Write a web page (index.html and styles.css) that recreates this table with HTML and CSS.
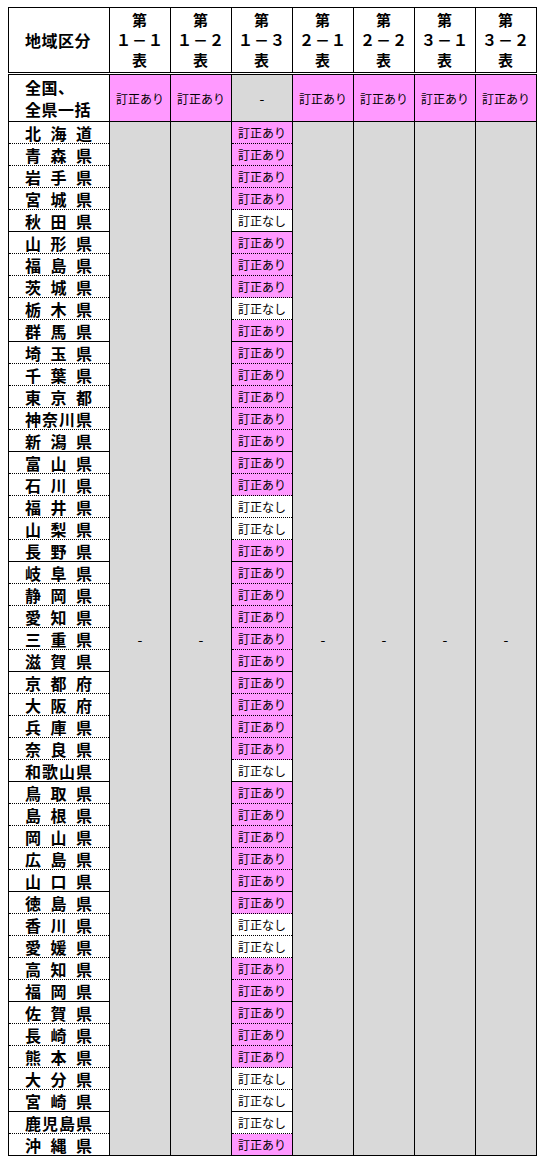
FILE: index.html
```html
<!DOCTYPE html>
<html lang="ja">
<head>
<meta charset="utf-8">
<title>訂正状況</title>
<link rel="stylesheet" href="styles.css">
</head>
<body>
<table class="tbl">
<colgroup><col class="c1"><col class="cn"><col class="cn"><col class="cn"><col class="cn"><col class="cn"><col class="cn"><col class="cn"></colgroup>
<thead>
<tr class="head">
<th class="name"><span class="lbl">地域区分</span></th>
<th>第<br>１－１<br>表</th>
<th>第<br>１－２<br>表</th>
<th>第<br>１－３<br>表</th>
<th>第<br>２－１<br>表</th>
<th>第<br>２－２<br>表</th>
<th>第<br>３－１<br>表</th>
<th>第<br>３－２<br>表</th>
</tr>
</thead>
<tbody>
<tr class="all">
<td class="name"><span class="lbl2">全国、<br>全県一括</span></td>
<td class="ari">訂正あり</td>
<td class="ari">訂正あり</td>
<td class="gray dash">-</td>
<td class="ari">訂正あり</td>
<td class="ari">訂正あり</td>
<td class="ari">訂正あり</td>
<td class="ari">訂正あり</td>
</tr>
<tr class="p"><td class="name"><span class="j">北 海 道</span></td><td class="gray span dash" rowspan="47">-</td><td class="gray span dash" rowspan="47">-</td><td class="ari">訂正あり</td><td class="gray span dash" rowspan="47">-</td><td class="gray span dash" rowspan="47">-</td><td class="gray span dash" rowspan="47">-</td><td class="gray span dash" rowspan="47">-</td></tr>
<tr class="p"><td class="name"><span class="j">青 森 県</span></td><td class="ari">訂正あり</td></tr>
<tr class="p"><td class="name"><span class="j">岩 手 県</span></td><td class="ari">訂正あり</td></tr>
<tr class="p"><td class="name"><span class="j">宮 城 県</span></td><td class="ari">訂正あり</td></tr>
<tr class="p end"><td class="name"><span class="j">秋 田 県</span></td><td class="nashi">訂正なし</td></tr>
<tr class="p"><td class="name"><span class="j">山 形 県</span></td><td class="ari">訂正あり</td></tr>
<tr class="p"><td class="name"><span class="j">福 島 県</span></td><td class="ari">訂正あり</td></tr>
<tr class="p"><td class="name"><span class="j">茨 城 県</span></td><td class="ari">訂正あり</td></tr>
<tr class="p"><td class="name"><span class="j">栃 木 県</span></td><td class="nashi">訂正なし</td></tr>
<tr class="p end"><td class="name"><span class="j">群 馬 県</span></td><td class="ari">訂正あり</td></tr>
<tr class="p"><td class="name"><span class="j">埼 玉 県</span></td><td class="ari">訂正あり</td></tr>
<tr class="p"><td class="name"><span class="j">千 葉 県</span></td><td class="ari">訂正あり</td></tr>
<tr class="p"><td class="name"><span class="j">東 京 都</span></td><td class="ari">訂正あり</td></tr>
<tr class="p"><td class="name"><span class="j">神奈川県</span></td><td class="ari">訂正あり</td></tr>
<tr class="p end"><td class="name"><span class="j">新 潟 県</span></td><td class="ari">訂正あり</td></tr>
<tr class="p"><td class="name"><span class="j">富 山 県</span></td><td class="ari">訂正あり</td></tr>
<tr class="p"><td class="name"><span class="j">石 川 県</span></td><td class="ari">訂正あり</td></tr>
<tr class="p"><td class="name"><span class="j">福 井 県</span></td><td class="nashi">訂正なし</td></tr>
<tr class="p"><td class="name"><span class="j">山 梨 県</span></td><td class="nashi">訂正なし</td></tr>
<tr class="p end"><td class="name"><span class="j">長 野 県</span></td><td class="ari">訂正あり</td></tr>
<tr class="p"><td class="name"><span class="j">岐 阜 県</span></td><td class="ari">訂正あり</td></tr>
<tr class="p"><td class="name"><span class="j">静 岡 県</span></td><td class="ari">訂正あり</td></tr>
<tr class="p"><td class="name"><span class="j">愛 知 県</span></td><td class="ari">訂正あり</td></tr>
<tr class="p"><td class="name"><span class="j">三 重 県</span></td><td class="ari">訂正あり</td></tr>
<tr class="p end"><td class="name"><span class="j">滋 賀 県</span></td><td class="ari">訂正あり</td></tr>
<tr class="p"><td class="name"><span class="j">京 都 府</span></td><td class="ari">訂正あり</td></tr>
<tr class="p"><td class="name"><span class="j">大 阪 府</span></td><td class="ari">訂正あり</td></tr>
<tr class="p"><td class="name"><span class="j">兵 庫 県</span></td><td class="ari">訂正あり</td></tr>
<tr class="p"><td class="name"><span class="j">奈 良 県</span></td><td class="ari">訂正あり</td></tr>
<tr class="p end"><td class="name"><span class="j">和歌山県</span></td><td class="nashi">訂正なし</td></tr>
<tr class="p"><td class="name"><span class="j">鳥 取 県</span></td><td class="ari">訂正あり</td></tr>
<tr class="p"><td class="name"><span class="j">島 根 県</span></td><td class="ari">訂正あり</td></tr>
<tr class="p"><td class="name"><span class="j">岡 山 県</span></td><td class="ari">訂正あり</td></tr>
<tr class="p"><td class="name"><span class="j">広 島 県</span></td><td class="ari">訂正あり</td></tr>
<tr class="p end"><td class="name"><span class="j">山 口 県</span></td><td class="ari">訂正あり</td></tr>
<tr class="p"><td class="name"><span class="j">徳 島 県</span></td><td class="ari">訂正あり</td></tr>
<tr class="p"><td class="name"><span class="j">香 川 県</span></td><td class="nashi">訂正なし</td></tr>
<tr class="p"><td class="name"><span class="j">愛 媛 県</span></td><td class="nashi">訂正なし</td></tr>
<tr class="p"><td class="name"><span class="j">高 知 県</span></td><td class="ari">訂正あり</td></tr>
<tr class="p end"><td class="name"><span class="j">福 岡 県</span></td><td class="ari">訂正あり</td></tr>
<tr class="p"><td class="name"><span class="j">佐 賀 県</span></td><td class="ari">訂正あり</td></tr>
<tr class="p"><td class="name"><span class="j">長 崎 県</span></td><td class="ari">訂正あり</td></tr>
<tr class="p"><td class="name"><span class="j">熊 本 県</span></td><td class="ari">訂正あり</td></tr>
<tr class="p"><td class="name"><span class="j">大 分 県</span></td><td class="nashi">訂正なし</td></tr>
<tr class="p end"><td class="name"><span class="j">宮 崎 県</span></td><td class="nashi">訂正なし</td></tr>
<tr class="p"><td class="name"><span class="j">鹿児島県</span></td><td class="nashi">訂正なし</td></tr>
<tr class="p end"><td class="name"><span class="j">沖 縄 県</span></td><td class="ari">訂正あり</td></tr>
</tbody>
</table>
</body>
</html>
```
FILE: styles.css
```css
html, body {
  background: #fff;
}
body {
  margin: 7px 0 0 8px;
  font-family: "Noto Sans CJK JP", "Noto Sans", sans-serif;
  color: #000;
}
.tbl {
  border-collapse: collapse;
  table-layout: fixed;
  width: 529px;
  border: 1px solid #000;
}
.c1 { width: 101px; }
.cn { width: 61px; }
.tbl th,
.tbl td {
  padding: 0;
  border-left: 1px solid #000;
  border-right: 1px solid #000;
  box-sizing: border-box;
  text-align: center;
  vertical-align: middle;
}
.head th {
  height: 66px;
  font-size: 15px;
  font-weight: 700;
  line-height: 20px;
  letter-spacing: 1px;
  border-bottom: 3px double #000;
  background: #fff;
}
.head th.name,
.tbl td.name {
  text-align: left;
  padding-left: 16px;
}
.head th.name {
  font-size: 16px;
  letter-spacing: 0.5px;
}
.lbl {
  display: inline-block;
}
.all td {
  height: 48px;
  font-size: 12px;
  border-bottom: 1px solid #000;
}
.all td.name {
  font-size: 16px;
  font-weight: 700;
  line-height: 22px;
  background: #fff;
}
.lbl2 {
  display: inline-block;
  letter-spacing: 0.5px;
}
.p td {
  height: 22px;
  font-size: 12px;
  line-height: 14px;
  border-bottom: 1px dotted #000;
}
.p.end td {
  border-bottom: 1px solid #000;
}
.p td.name {
  font-size: 16px;
  font-weight: 700;
  line-height: 18px;
  background: #fff;
}
.tbl td.span {
  border-bottom: 1px solid #000;
}
.tbl td.dash {
  font-size: 14px;
}
.j {
  display: block;
  width: 67px;
  text-align: justify;
  text-align-last: justify;
}
.ari { background: #ff99ff; }
.nashi { background: #fff; }
.gray { background: #d9d9d9; }
```
